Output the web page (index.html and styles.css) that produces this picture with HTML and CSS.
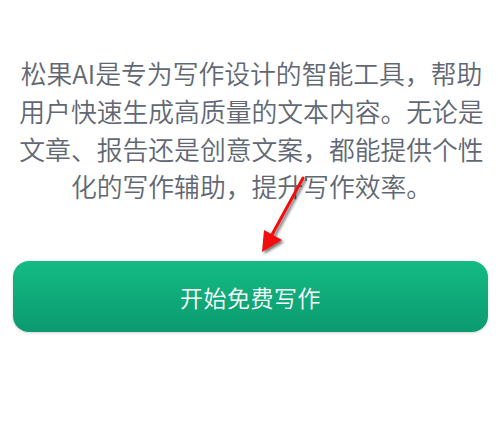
FILE: index.html
```html
<!DOCTYPE html>
<html lang="zh">
<head>
<meta charset="utf-8">
<link rel="stylesheet" href="styles.css">
</head>
<body>
<main class="page">
  <p class="intro">松果AI是专为写作设计的智能工具，帮助用户快速生成高质量的文本内容。无论是文章、报告还是创意文案，都能提供个性化的写作辅助，提升写作效率。</p>
  <button class="cta">开始免费写作</button>
  <svg class="arrow" width="498" height="423" viewBox="0 0 498 423">
    <defs>
      <filter id="sh" x="-50%" y="-50%" width="200%" height="200%">
        <feGaussianBlur in="SourceAlpha" stdDeviation="1.6"/>
        <feOffset dx="1.5" dy="2" result="b"/>
        <feComponentTransfer><feFuncA type="linear" slope="0.55"/></feComponentTransfer>
        <feMerge><feMergeNode/><feMergeNode in="SourceGraphic"/></feMerge>
      </filter>
    </defs>
    <g filter="url(#sh)">
      <line x1="303" y1="178" x2="268" y2="242" stroke="#f01010" stroke-width="3" stroke-linecap="round"/>
      <polygon points="262,252 264,230 282,240" fill="#f01010"/>
    </g>
  </svg>
</main>
</body>
</html>
```

FILE: styles.css
```css
html, body {
  margin: 0;
  padding: 0;
  background: #ffffff;
}
.page {
  position: relative;
  width: 498px;
  height: 423px;
  box-sizing: border-box;
  padding: 54px 10px 0 13px;
  display: flex;
  flex-direction: column;
  align-items: stretch;
  font-family: "Noto Sans CJK SC", "Noto Sans", sans-serif;
}
.intro {
  margin: 0 -1px 0 1px;
  font-size: 25.8px;
  font-weight: 350;
  line-height: 37.8px;
  color: #616873;
  text-align: center;
}
.cta {
  margin-top: 56px;
  height: 71px;
  border: none;
  border-radius: 16px;
  background: linear-gradient(180deg, #14bb83 0%, #0b9a70 100%);
  box-shadow: 0 1px 3px rgba(0, 0, 0, 0.18);
  color: #ffffff;
  font-family: "Noto Sans CJK SC", "Noto Sans", sans-serif;
  font-size: 23px;
  font-weight: 350;
  letter-spacing: 0.5px;
  padding: 0;
}
.arrow {
  position: absolute;
  left: 0;
  top: 0;
  pointer-events: none;
}
```
